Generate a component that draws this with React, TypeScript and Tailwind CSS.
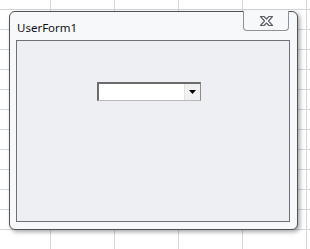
import React from 'react';

function CloseGlyph() {
  return (
    <svg width="15" height="12" viewBox="0 0 15 12">
      <path
        d="M1.5 1.5 L5 1.5 L7.5 4 L10 1.5 L13.5 1.5 L9.5 6 L13.5 10.5 L10 10.5 L7.5 8 L5 10.5 L1.5 10.5 L5.5 6 Z"
        fill="#ffffff"
        stroke="#5b5f68"
        strokeWidth="1.2"
        strokeLinejoin="round"
      />
    </svg>
  );
}

function ComboBox() {
  return (
    <div className="flex w-[104px] h-[19px] bg-white border-t-2 border-l-2 border-t-[#6c6c6c] border-l-[#6c6c6c] border-b border-r border-b-[#b8b8b8] border-r-[#8c8c8c]">
      <div className="flex-1" />
      <div className="w-[16px] h-full flex items-center justify-center bg-[#f1f1f1] border-l border-[#e2e2e2]">
        <svg width="7" height="4" viewBox="0 0 7 4">
          <path d="M0 0 H7 L3.5 4 Z" fill="#000" />
        </svg>
      </div>
    </div>
  );
}

export default function App() {
  return (
    <div className="w-[310px] h-[249px] overflow-hidden bg-white bg-[linear-gradient(to_right,#d4d6d8_1px,transparent_1px),linear-gradient(to_bottom,#d4d6d8_1px,transparent_1px)] bg-[size:64px_20px] bg-[position:50px_9px] pt-[11px] pl-[9px] font-['Noto_Sans',sans-serif]">
      {/* UserForm window */}
      <div className="w-[289px] h-[219px] flex flex-col rounded-[6px] border border-[#4f5359] bg-[#f7f8fa] shadow-[2px_2px_4px_rgba(0,0,0,0.35)]">
        <div className="flex justify-between h-[28px] pl-[7px] pr-[8px]">
          <span className="text-[11.5px] leading-none pt-[10px] text-[#111]">UserForm1</span>
          <div className="-mt-px w-[46px] h-[20px] flex items-center justify-center border border-t-0 border-[#8e9196] rounded-b-[4px] bg-[#f7f8fa]">
            <CloseGlyph />
          </div>
        </div>
        <div className="ml-[6px] mr-[7px] mb-[7px] flex-1 border border-[#6e7075] bg-[#eeeff3] pl-[80px] pt-[41px]">
          <ComboBox />
        </div>
      </div>
    </div>
  );
}
